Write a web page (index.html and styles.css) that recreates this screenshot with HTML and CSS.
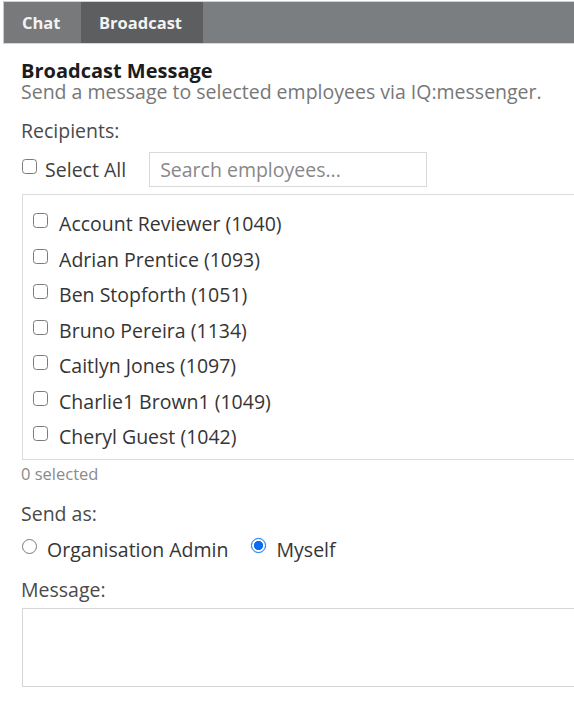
FILE: index.html
```html
<!DOCTYPE html>
<html lang="en">
<head>
<meta charset="utf-8">
<title>Broadcast</title>
<link rel="stylesheet" href="styles.css">
</head>
<body>
<nav class="tabs">
  <div class="tab tab-chat">Chat</div>
  <div class="tab tab-broadcast active">Broadcast</div>
</nav>
<main class="content">
  <h1 class="title">Broadcast Message</h1>
  <p class="subtitle">Send a message to selected employees via IQ:messenger.</p>

  <div class="label label-recipients">Recipients:</div>
  <div class="select-row">
    <label class="select-all"><span class="cb"></span> Select All</label>
    <input type="text" class="search" placeholder="Search employees..." autofocus>
  </div>

  <div class="list">
    <label class="item"><span class="cb"></span> Account Reviewer (1040)</label>
    <label class="item"><span class="cb"></span> Adrian Prentice (1093)</label>
    <label class="item"><span class="cb"></span> Ben Stopforth (1051)</label>
    <label class="item"><span class="cb"></span> Bruno Pereira (1134)</label>
    <label class="item"><span class="cb"></span> Caitlyn Jones (1097)</label>
    <label class="item"><span class="cb"></span> Charlie1 Brown1 (1049)</label>
    <label class="item"><span class="cb"></span> Cheryl Guest (1042)</label>
  </div>
  <div class="count">0 selected</div>

  <div class="label label-send">Send as:</div>
  <div class="radio-row">
    <label class="radio-label"><span class="rb"></span> Organisation Admin</label>
    <label class="radio-label"><span class="rb rb-on"></span> Myself</label>
  </div>

  <div class="label label-message">Message:</div>
  <textarea class="message"></textarea>
</main>
</body>
</html>
```

FILE: styles.css
```css
html, body {
  margin: 0;
  padding: 0;
  background: #ffffff;
}
body {
  font-family: "Open Sans", "Noto Sans", "DejaVu Sans", sans-serif;
  font-size: 19.5px;
  font-weight: 500;
  color: #353535;
  overflow: hidden;
  width: 574px;
  height: 722px;
}

/* Tabs */
.tabs {
  display: flex;
  margin: 1px 0 0 3px;
  height: 41px;
  background: #7b7e80;
  border-top: 1px solid #cfd0d1;
  border-bottom: 1px solid #d6d7d8;
  border-left: 1px solid #c9cacb;
}
.tab {
  box-sizing: border-box;
  height: 41px;
  line-height: 41px;
  padding-left: 18px;
  font-size: 16.5px;
  font-weight: 700;
  color: #f3f3f3;
}
.tab-chat {
  width: 77px;
  background: #77797b;
}
.tab-broadcast {
  width: 122px;
}
.tab.active {
  background: #5d5e60;
}

/* Content */
.content {
  padding-left: 21px;
}
.title {
  margin: 17px 0 0;
  font-size: 20px;
  line-height: 20px;
  font-weight: 700;
  color: #1c1c1c;
}
.subtitle {
  margin: 1px 0 0;
  line-height: 19px;
  font-weight: 400;
  color: #777777;
  white-space: nowrap;
}
.label {
  line-height: 24px;
  color: #4a4a4a;
}
.label-recipients {
  margin-top: 18px;
}
.select-row {
  display: flex;
  align-items: center;
  gap: 23px;
  margin-top: 9px;
  height: 35px;
}
.select-all {
  line-height: 24px;
  color: #404040;
  white-space: nowrap;
}
.cb {
  display: inline-block;
  box-sizing: border-box;
  width: 15px;
  height: 15px;
  margin: 0 3px 3px 1px;
  border: 1.6px solid #7a7a7a;
  border-radius: 3.5px;
  background: #fff;
  vertical-align: baseline;
}
.search {
  box-sizing: border-box;
  width: 278px;
  height: 35px;
  margin: 0;
  padding: 0 0 0 10px;
  border: 1px solid #d9d9d9;
  border-radius: 0;
  outline: none;
  font-family: inherit;
  font-size: 19.5px;
  font-weight: 400;
  color: #333;
  background: #fff;
}
.search::placeholder {
  color: #888888;
}

.list {
  box-sizing: border-box;
  width: 600px;
  height: 266px;
  margin: 7px 0 0 1px;
  padding: 11px 10px 0;
  border: 1px solid #dcdcdc;
  overflow: hidden;
}
.item {
  display: block;
  height: 35.5px;
  line-height: 35.5px;
  white-space: nowrap;
  color: #353535;
}
.item .cb {
  margin: 0 6px 3px 0;
}

.count {
  margin-top: 4px;
  font-size: 16.5px;
  font-weight: 400;
  line-height: 20px;
  color: #8a8a8a;
}
.label-send {
  margin-top: 18px;
}
.radio-row {
  display: flex;
  gap: 22px;
  margin-top: 12px;
  line-height: 24px;
  color: #353535;
}
.radio-label {
  white-space: nowrap;
}
.rb {
  display: inline-block;
  box-sizing: border-box;
  width: 15px;
  height: 15px;
  margin: 0 5px 3px 1px;
  border: 1.5px solid #7a7a7a;
  border-radius: 50%;
  background: #fff;
  vertical-align: baseline;
}
.rb-on {
  border-color: #0b6cf3;
  background: radial-gradient(circle, #0b6cf3 0 4.3px, #ffffff 5px);
  box-shadow: 0 0 1.5px rgba(11, 108, 243, 0.35);
  margin-bottom: 4px;
}
.label-message {
  margin-top: 16px;
}
.message {
  display: block;
  box-sizing: border-box;
  width: 600px;
  height: 79px;
  margin: 6px 0 0 1px;
  padding: 4px;
  border: 1px solid #d6d6d6;
  border-radius: 0;
  resize: none;
  outline: none;
  font-family: inherit;
  font-size: 19.5px;
  background: #fff;
}
```
